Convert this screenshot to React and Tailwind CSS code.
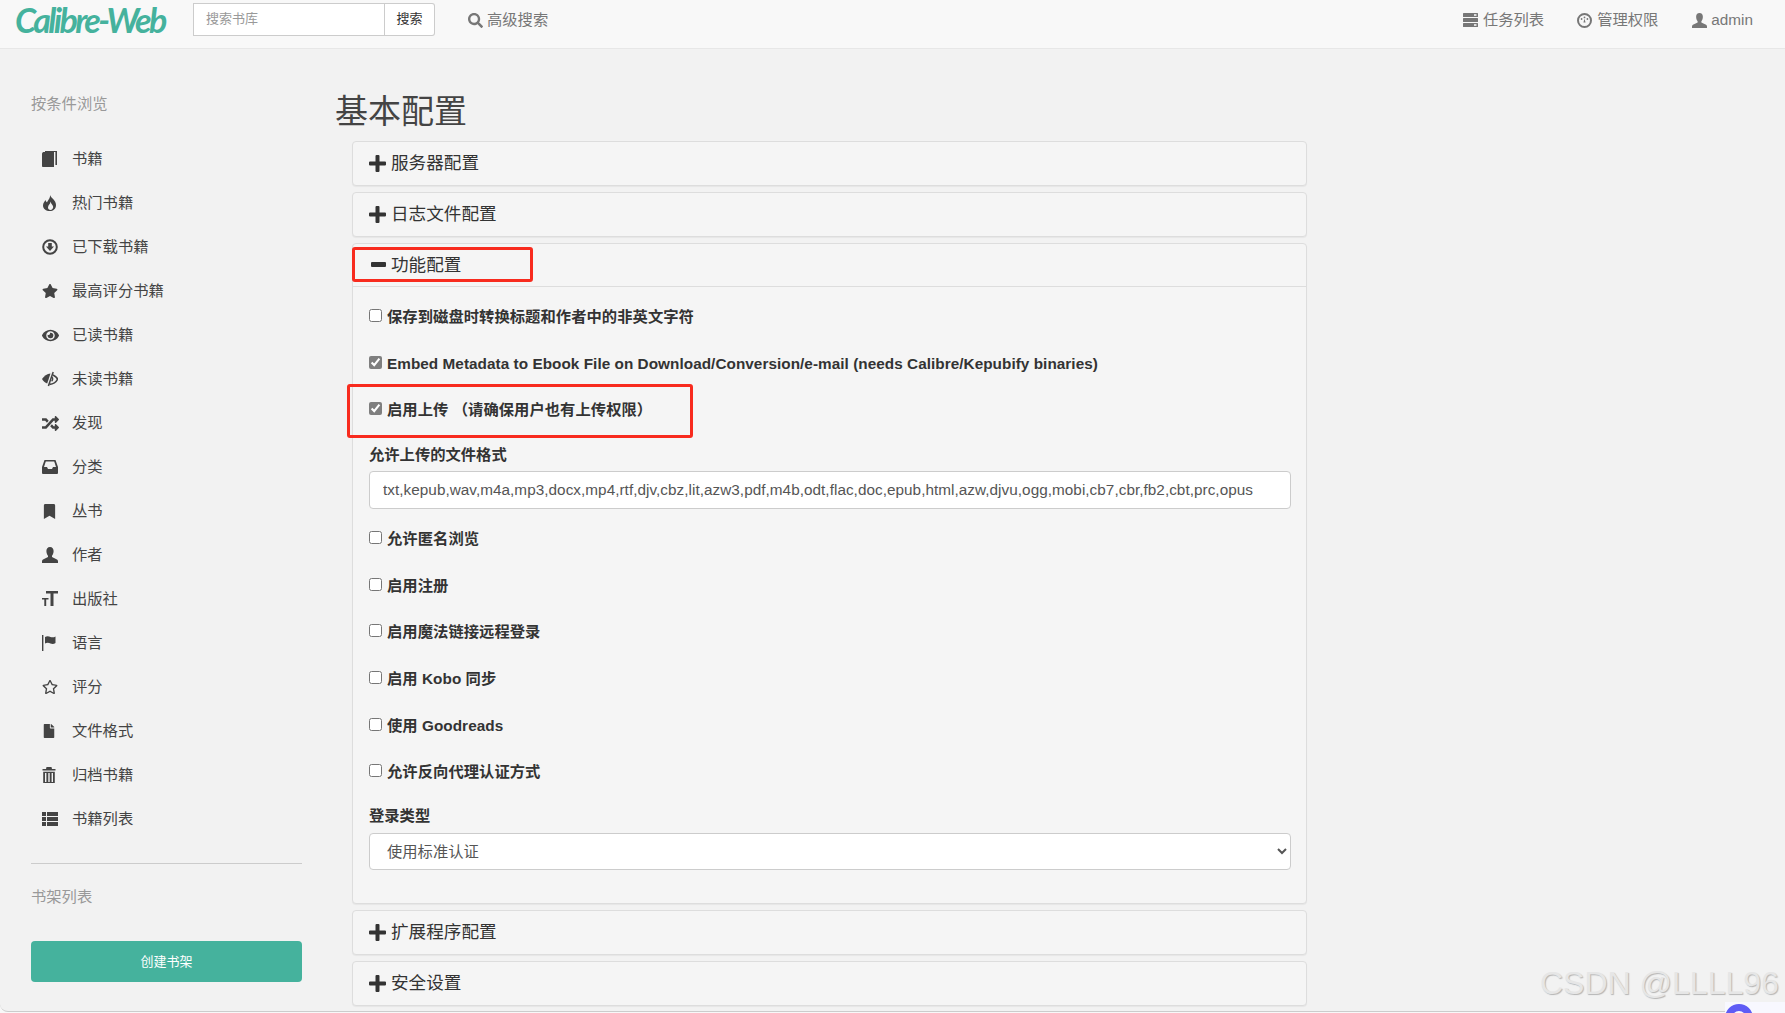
import React from "react";
import { FaStar, FaRegStar, FaEye, FaRandom, FaBookmark, FaFile, FaSearch } from "react-icons/fa";

const BookIcon = () => (
    <svg width="15" height="16" viewBox="0 0 15 16" fill="#444">
        <path d="M0 3 C0 1.5 1 1 2 1 L12 1 L12 16 L1 16 C.4 16 0 15.5 0 15 Z" />
        <path d="M3 0 L15 0 L15 14 L13.4 14 L13.4 1 L3 1 Z" />
    </svg>
);

const FireIcon = () => (
    <svg width="15" height="16" viewBox="0 0 15 16" fill="#444">
        <path
            fillRule="evenodd"
            d="M8 0 C9 3 14 5 14 10 C14 14 11 16 8 16 C4 16 1 14 1 10.5 C1 8 2.5 6.5 3.5 5 C4 6.5 4.5 7 5 7.5 C6 5 8.5 3 8 0 Z M8.5 6.5 C8.5 9 6 10 6 12.5 C6 14 7 15 8.5 15 C10 15 11.2 13.5 11.2 12 C11.2 10 9 9 8.5 6.5 Z"
        />
    </svg>
);

const DownloadIcon = () => (
    <svg width="16" height="16" viewBox="0 0 16 16" fill="#444">
        <circle cx="8" cy="8" r="6.8" fill="none" stroke="#444" strokeWidth="2" />
        <path d="M6.2 4 H9.8 V7.5 H12 L8 12 L4 7.5 H6.2 Z" />
    </svg>
);

const EyeCloseIcon = () => (
    <svg width="16" height="16" viewBox="0 0 16 16" fill="#444">
        <path d="M8.5 2.5 C5 2.5 2 5 0 8 C1.2 10 3 11.6 5.2 12.6 L8.5 2.5 Z" />
        <path d="M11 4 C13 5 14.8 6.5 15.6 8 C14.5 10.5 11 13 7.5 13.4" fill="none" stroke="#444" strokeWidth="1.6" />
        <path d="M11.2 1 L6.4 15" fill="none" stroke="#444" strokeWidth="1.5" />
        <path d="M9.8 6 C11 6.8 11 9 9.6 10.2" fill="none" stroke="#444" strokeWidth="1.4" />
    </svg>
);

const InboxIcon = () => (
    <svg width="16" height="14" viewBox="0 0 16 14" fill="#444">
        <path
            fillRule="evenodd"
            d="M2.5 0 H13.5 L16 7 V13 Q16 14 15 14 H1 Q0 14 0 13 V7 Z M3.8 1.6 L2 7 H5 L6 9 H10 L11 7 H14 L12.2 1.6 Z"
        />
    </svg>
);

const UserIcon = ({ color = "#444", size = 16 }) => (
    <svg width={size} height={size} viewBox="0 0 16 16" fill={color}>
        <path d="M8 0 C10.4 0 11.6 1.8 11.6 4 C11.6 6.2 10.8 7.8 10 8.8 L10 10 L15 12.6 C15.7 13 16 13.6 16 14.4 L16 16 L0 16 L0 14.4 C0 13.6 .3 13 1 12.6 L6 10 L6 8.8 C5.2 7.8 4.4 6.2 4.4 4 C4.4 1.8 5.6 0 8 0 Z" />
    </svg>
);

const TextSizeIcon = () => (
    <svg width="16" height="16" viewBox="0 0 16 16" fill="#444">
        <path d="M4 0 H16 V2.5 H11.5 V15 H8.5 V2.5 H4 Z" />
        <path d="M0 7 H6.5 V8.6 H4.2 V15 H2.3 V8.6 H0 Z" />
    </svg>
);

const FlagIcon = () => (
    <svg width="14" height="16" viewBox="0 0 14 16" fill="#444">
        <rect x="0" y="0" width="1.4" height="16" />
        <path d="M3 2 C5 .6 7 1.2 8.5 2 C10 2.6 12 2.4 13.5 1.4 L13.5 8 C12 9 10 9.2 8.5 8.4 C7 7.6 5 7.2 3 8.4 Z" />
    </svg>
);

const TrashIcon = () => (
    <svg width="14" height="16" viewBox="0 0 14 16" fill="#444">
        <path d="M4.5 0 H9.5 L10 2 H13.5 V3.6 H.5 V2 H4 Z" />
        <path d="M1.2 4.8 H12.8 V16 H1.2 Z M3 6 V15 H4.4 V6 Z M6.3 6 V15 H7.7 V6 Z M9.6 6 V15 H11 V6 Z" fillRule="evenodd" />
    </svg>
);

const ListIcon = () => (
    <svg width="16" height="14" viewBox="0 0 16 14" fill="#444">
        <rect x="0" y="0" width="4" height="4" />
        <rect x="5" y="0" width="11" height="4" />
        <rect x="0" y="5" width="4" height="4" />
        <rect x="5" y="5" width="11" height="4" />
        <rect x="0" y="10" width="4" height="4" />
        <rect x="5" y="10" width="11" height="4" />
    </svg>
);

const TasksIcon = () => (
    <svg width="15" height="14" viewBox="0 0 15 14" fill="#777">
        <rect x="0" y="0" width="15" height="4" rx=".5" />
        <rect x="0" y="5" width="15" height="4" rx=".5" />
        <rect x="0" y="10" width="15" height="4" rx=".5" />
        <rect x="11" y="1.2" width="2.5" height="1.6" fill="#f8f8f8" />
        <rect x="11" y="11.2" width="2.5" height="1.6" fill="#f8f8f8" />
    </svg>
);

const DashIcon = () => (
    <svg width="15" height="15" viewBox="0 0 15 15" fill="#777">
        <circle cx="7.5" cy="7.5" r="6.5" fill="none" stroke="#777" strokeWidth="2" />
        <circle cx="4.6" cy="6" r=".9" />
        <circle cx="7.5" cy="4.4" r=".9" />
        <circle cx="10.4" cy="6" r=".9" />
        <path d="M6.4 9.5 L7.5 5.8 L8.6 9.5 Z" />
    </svg>
);

const PlusIcon = () => (
    <svg width="17" height="17" viewBox="0 0 17 17" fill="#333">
        <path d="M6.5 1 Q6.5 0 7.5 0 H9.5 Q10.5 0 10.5 1 V6.5 H16 Q17 6.5 17 7.5 V9.5 Q17 10.5 16 10.5 H10.5 V16 Q10.5 17 9.5 17 H7.5 Q6.5 17 6.5 16 V10.5 H1 Q0 10.5 0 9.5 V7.5 Q0 6.5 1 6.5 H6.5 Z" />
    </svg>
);

const MinusIcon = () => (
    <svg width="15" height="6" viewBox="0 0 15 6" fill="#333">
        <rect x="0" y="0" width="15" height="5" rx="1" />
    </svg>
);

const sideItems = [
    { icon: <BookIcon />, label: "书籍" },
    { icon: <FireIcon />, label: "热门书籍" },
    { icon: <DownloadIcon />, label: "已下载书籍" },
    { icon: <FaStar size={16} color="#444" />, label: "最高评分书籍" },
    { icon: <FaEye size={17} color="#444" />, label: "已读书籍" },
    { icon: <EyeCloseIcon />, label: "未读书籍" },
    { icon: <FaRandom size={17} color="#444" />, label: "发现" },
    { icon: <InboxIcon />, label: "分类" },
    { icon: <FaBookmark size={15} color="#444" />, label: "丛书" },
    { icon: <UserIcon />, label: "作者" },
    { icon: <TextSizeIcon />, label: "出版社" },
    { icon: <FlagIcon />, label: "语言" },
    { icon: <FaRegStar size={16} color="#444" />, label: "评分" },
    { icon: <FaFile size={14} color="#444" />, label: "文件格式" },
    { icon: <TrashIcon />, label: "归档书籍" },
    { icon: <ListIcon />, label: "书籍列表" },
];

const Heading = ({ title, open }) => (
    <div className={`h-[43px] flex items-center pl-[16px] text-[#333] text-[17.6px] ${open ? "border-b border-[#ddd]" : ""}`}>
        <span className="w-[22px] flex items-center">
            {open ? <span className="pl-[2px]"><MinusIcon /></span> : <PlusIcon />}
        </span>
        <span>{title}</span>
    </div>
);

const Panel = ({ title, open, children }) => (
    <div className="border border-[#ddd] rounded-[4px] bg-[#f5f5f5] shadow-[0_1px_1px_rgba(0,0,0,0.05)]">
        <Heading title={title} open={open} />
        {children}
    </div>
);

const Check = ({ label, checked }) => (
    <label className="h-[46.7px] flex items-center font-bold text-[15.3px] text-[#333] tracking-[0.05px]">
        <input type="checkbox" defaultChecked={checked} className="w-[13px] h-[13px] mr-[5px] mb-[4px] accent-[#7f7f7f]" />
        <span>{label}</span>
    </label>
);

const App = () => {
    return (
        <div className="relative w-[1785px] h-[1013px] overflow-hidden bg-[#f8f8f8] font-['Liberation_Sans','Noto_Sans_CJK_SC',sans-serif]">
            <div className="h-[1012px] bg-[#f2f2f2] border-b border-[#ccc] rounded-bl-[8px] overflow-hidden">
                <nav className="h-[49px] pb-[8px] bg-[#f8f8f8] border-b border-[#e7e7e7] flex items-center text-[15.3px] text-[#777]">
                    <div className="w-[193px] shrink-0 pl-[15px] whitespace-nowrap text-[34px] italic font-bold text-[#45b29d] font-['Lato','Liberation_Serif',serif] tracking-[-2.6px] leading-[40px]">Calibre-Web</div>
                    <div className="flex h-[33px] mb-[2px]">
                        <input readOnly placeholder="搜索书库" className="w-[192px] bg-white border border-[#ccc] px-[12px] text-[13px] placeholder:text-[#999] outline-none" />
                        <button className="w-[50px] bg-white border border-l-0 border-[#ccc] rounded-r-[3px] text-[13px] text-[#333]">搜索</button>
                    </div>
                    <div className="ml-[33px] flex items-center gap-[4px]">
                        <FaSearch size={15} color="#777" />
                        <span>高级搜索</span>
                    </div>
                    <div className="ml-auto flex items-center pr-[32px]">
                        <TasksIcon />
                        <span className="ml-[5px]">任务列表</span>
                        <span className="ml-[33px]"><DashIcon /></span>
                        <span className="ml-[5px]">管理权限</span>
                        <span className="ml-[34px]"><UserIcon color="#777" size={15} /></span>
                        <span className="ml-[4px]">admin</span>
                    </div>
                </nav>
                <div className="flex">
                    <aside className="w-[335px] shrink-0 pl-[31px] text-[15.3px]">
                        <div className="mt-[44px] h-[22px] leading-[22px] text-[#999]">按条件浏览</div>
                        <ul className="mt-[22px]">
                            {sideItems.map((item) => (
                                <li key={item.label} className="h-[44px] flex items-center text-[#444]">
                                    <span className="w-[41px] pl-[11px] flex items-center">{item.icon}</span>
                                    <span>{item.label}</span>
                                </li>
                            ))}
                        </ul>
                        <div className="w-[271px] mt-[22px] border-t border-[#ccc]"></div>
                        <div className="mt-[22px] h-[22px] leading-[22px] text-[#999]">书架列表</div>
                        <button className="mt-[33px] w-[271px] h-[41px] bg-[#45b29d] rounded-[4px] text-white text-[13px]">创建书架</button>
                    </aside>
                    <main className="w-[972px]">
                        <h2 className="mt-[43px] h-[40px] leading-[40px] mb-[9px] text-[33px] text-[#444]">基本配置</h2>
                        <div className="ml-[17px] w-[955px] flex flex-col gap-[6px]">
                            <Panel title="服务器配置" />
                            <Panel title="日志文件配置" />
                            <Panel title="功能配置" open>
                                <div className="pl-[16px] pr-[15px] pt-[7px] pb-[33px]">
                                    <Check label="保存到磁盘时转换标题和作者中的非英文字符" />
                                    <Check checked label="Embed Metadata to Ebook File on Download/Conversion/e-mail (needs Calibre/Kepubify binaries)" />
                                    <Check checked label="启用上传 （请确保用户也有上传权限）" />
                                    <div className="mt-[10px] h-[22px] leading-[22px] font-bold text-[15.3px] text-[#333]">允许上传的文件格式</div>
                                    <input
                                        readOnly
                                        defaultValue="txt,kepub,wav,m4a,mp3,docx,mp4,rtf,djv,cbz,lit,azw3,pdf,m4b,odt,flac,doc,epub,html,azw,djvu,ogg,mobi,cb7,cbr,fb2,cbt,prc,opus"
                                        className="mt-[5px] mb-[7px] block w-full h-[38px] bg-white border border-[#ccc] rounded-[4px] px-[13px] text-[15.3px] tracking-[0.04px] text-[#555] outline-none"
                                    />
                                    <Check label="允许匿名浏览" />
                                    <Check label="启用注册" />
                                    <Check label="启用魔法链接远程登录" />
                                    <Check label="启用 Kobo 同步" />
                                    <Check label="使用 Goodreads" />
                                    <Check label="允许反向代理认证方式" />
                                    <div className="mt-[9px] h-[22px] leading-[22px] font-bold text-[15.3px] text-[#333]">登录类型</div>
                                    <select className="mt-[6px] block w-full h-[37px] bg-white border border-[#ccc] rounded-[4px] pl-[13px] pr-[4px] text-[15.3px] text-[#555] outline-none">
                                        <option>使用标准认证</option>
                                    </select>
                                </div>
                            </Panel>
                            <Panel title="扩展程序配置" />
                            <Panel title="安全设置" />
                        </div>
                    </main>
                </div>
            </div>
            {/* red annotation boxes */}
            <div className="absolute left-[352px] top-[247px] w-[181px] h-[35px] border-[3px] border-[#f82b1e] rounded-[3px]"></div>
            <div className="absolute left-[347px] top-[384px] w-[346px] h-[54px] border-[3px] border-[#f82b1e] rounded-[3px]"></div>
            {/* watermark */}
            <div className="absolute left-[1540px] top-[962px] text-[32px] leading-[42px] text-[#e6e6e6] [text-shadow:1px_1px_1px_#b5b5b5] whitespace-nowrap">CSDN @LLLL96</div>
            <div className="absolute left-[1725px] top-[1002px] w-[60px] h-[11px] bg-[#f8f8ff]"></div>
            <div className="absolute left-[1725px] top-[1004px] w-[28px] h-[28px] rounded-full border-[7px] border-[#5f5cf5]"></div>
        </div>
    );
};

export default App;
